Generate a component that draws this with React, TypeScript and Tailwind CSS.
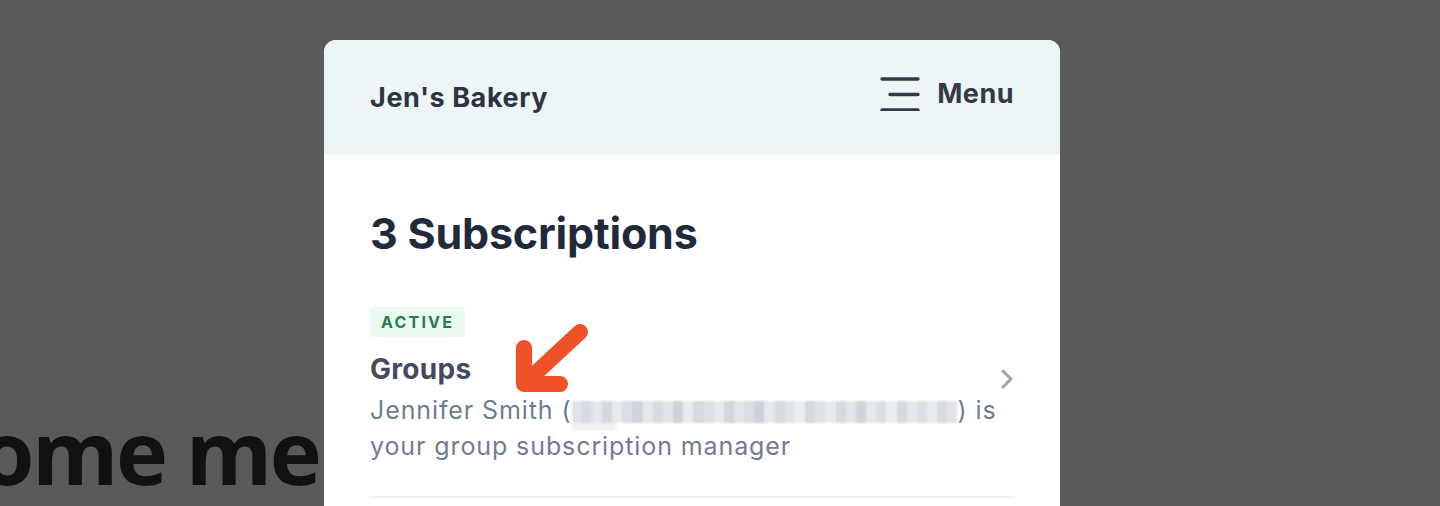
const blur = [
  "#dfe2e8", "#d6dae1", "#e4e7ec", "#d2d6de", "#e8eaee", "#dadde4", "#cfd3db", "#e6e8ed",
  "#d8dbe2", "#e1e4e9", "#cdd1d9", "#e9ebef", "#d4d8df", "#dde0e6", "#e7e9ee", "#d1d5dc",
  "#e3e6eb", "#d9dce3", "#cbd0d8", "#e5e8ec", "#d7dae1", "#e0e3e8", "#eceef1", "#d3d7de",
  "#dee1e7", "#e8eaee", "#d5d9e0", "#e2e5ea", "#cfd3da", "#e6e9ed", "#dbdee4", "#eaecf0",
  "#d6d9e0", "#e4e6eb", "#dcdfe5", "#e9ebef", "#d8dbe2", "#e1e3e8",
];

function Blurred() {
  return (
    <span className="relative inline-flex h-[22px] w-[386px] translate-y-[4px] align-baseline blur-[1.2px]">
      {blur.map((c, i) => (
        <span key={i} className="h-full flex-1" style={{ backgroundColor: c }} />
      ))}
      <span className="absolute left-0 top-[22px] h-[8px] w-[44px] bg-[#eef0f3]" />
    </span>
  );
}

function MenuIcon() {
  return (
    <svg width="40" height="34" viewBox="0 0 40 34" fill="none">
      <path d="M2 2h36M10 17.5h28M2 33h36" stroke="#343a46" strokeWidth="3.4" strokeLinecap="round" />
    </svg>
  );
}

function Chevron() {
  return (
    <svg width="14" height="22" viewBox="0 0 14 22" fill="none" className="shrink-0">
      <path d="M3 3l8 8-8 8" stroke="#9aa5b5" strokeWidth="3" strokeLinecap="round" strokeLinejoin="round" />
    </svg>
  );
}

export default function App() {
  return (
    <div className="relative h-[506px] w-[1440px] overflow-hidden bg-[#5a5a5a] font-['Inter',sans-serif]">
      <div className="pt-[407px]">
        <h1 className="-ml-[20px] whitespace-nowrap font-['Open_Sans',sans-serif] text-[88px] font-bold leading-none tracking-[-2.5px] text-[#111111]">
          ome members
        </h1>
      </div>

      <div className="absolute left-[324px] top-[40px] min-h-[500px] w-[736px] overflow-hidden rounded-t-[12px] bg-white">
        <header className="flex h-[115px] items-center justify-between bg-[#edf6f7] px-[46px]">
          <span className="pt-[1px] text-[27px] font-bold tracking-[0.6px] text-[#2d3340]">Jen's Bakery</span>
          <button className="flex items-center gap-[17px] text-[27px] font-bold tracking-[0.5px] text-[#343a46]">
            <span className="-mt-[7px]">
              <MenuIcon />
            </span>
            <span className="-mt-[6px]">Menu</span>
          </button>
        </header>

        <div className="px-[46px] pt-[52px]">
          <h2 className="text-[43px] font-bold leading-[52px] tracking-[-0.2px] text-[#1f2a3c]">3 Subscriptions</h2>

          <div className="mt-[48px] flex items-center justify-between border-b-2 border-[#eef1f5] pb-[32px]">
            <div>
              <span className="inline-block rounded-[4px] bg-[#eafaf1] px-[11px] py-[5px] text-[16px] font-bold leading-[20px] tracking-[2.2px] text-[#2a7a4e]">
                ACTIVE
              </span>
              <div className="mt-[14px] text-[28px] font-bold leading-[36px] tracking-[0.3px] text-[#434b5c]">Groups</div>
              <p className="mt-[5px] w-[628px] text-[25px] leading-[36px] tracking-[0.9px] text-[#6f7d93]">
                Jennifer Smith (<Blurred />) is your group subscription manager
              </p>
            </div>
            <span className="-mt-[14px]">
              <Chevron />
            </span>
          </div>
        </div>

        <svg className="absolute left-[180px] top-[280px]" width="90" height="90" viewBox="0 0 90 90" fill="none">
          <path
            d="M20 28v36h36M20 64L76 12"
            stroke="#ef5228"
            strokeWidth="16"
            strokeLinecap="round"
            strokeLinejoin="round"
          />
        </svg>
      </div>
    </div>
  );
}
